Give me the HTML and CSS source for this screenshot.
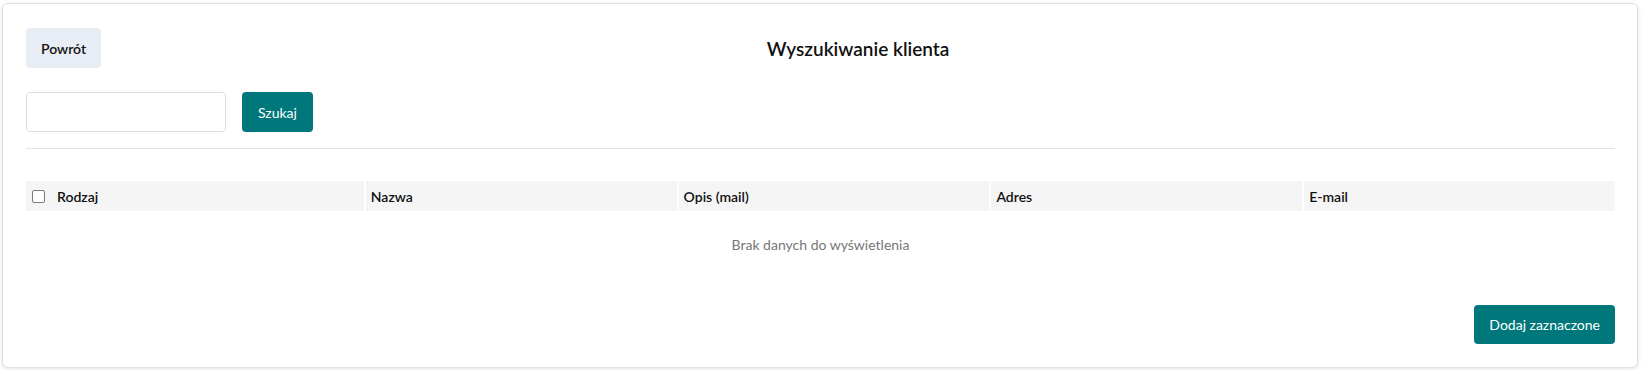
FILE: index.html
```html
<!DOCTYPE html>
<html lang="pl">
<head>
  <meta charset="UTF-8" />
  <title>Wyszukiwanie klienta</title>
  <link rel="stylesheet" href="styles.css">
</head>
<body>
  <div class="card">
    <header class="top">
      <button class="btn-back">Powrót</button>
      <h1>Wyszukiwanie klienta</h1>
    </header>

    <div class="search">
      <input type="text" class="search-input" />
      <button class="btn-primary">Szukaj</button>
    </div>

    <hr class="divider" />

    <table class="results">
      <thead>
        <tr>
          <th class="col-check"><span class="checkbox"></span></th>
          <th>Rodzaj</th>
          <th>Nazwa</th>
          <th>Opis (mail)</th>
          <th>Adres</th>
          <th>E-mail</th>
        </tr>
      </thead>
      <tbody>
        <tr>
          <td colspan="6" class="empty">Brak danych do wyświetlenia</td>
        </tr>
      </tbody>
    </table>

    <div class="actions">
      <button class="btn-primary btn-add">Dodaj zaznaczone</button>
    </div>
  </div>
</body>
</html>
```

FILE: styles.css
```css
html, body {
  margin: 0;
  padding: 0;
  background-color: #fff;
  font-family: Lato, "Open Sans", sans-serif;
  color: #111;
}

body {
  padding: 3px 7px 2px 2px;
}

.card {
  border: 1px solid #e2e2e2;
  border-radius: 6px;
  box-shadow: 0 1px 4px rgba(0,0,0,0.12);
  padding: 24px 22px 23px 23px;
}

.top {
  display: flex;
  align-items: center;
}

.top h1 {
  flex: 1;
  margin: 0;
  text-align: center;
  font-size: 19px;
  font-weight: 600;
}

.btn-back {
  height: 40px;
  padding: 0 15px;
  border: none;
  border-radius: 4px;
  background-color: #e8ecf4;
  font-family: inherit;
  font-size: 14px;
  font-weight: 600;
  color: #111;
}

.search {
  display: flex;
  align-items: center;
  gap: 16px;
  margin-top: 24px;
}

.search-input {
  width: 200px;
  height: 40px;
  box-sizing: border-box;
  border: 1px solid #dedede;
  border-radius: 4px;
}

.btn-primary {
  height: 40px;
  padding: 0 16px;
  border: none;
  border-radius: 4px;
  background-color: #00777a;
  color: #fff;
  font-family: inherit;
  font-size: 14px;
}

.divider {
  border: none;
  border-top: 1px solid #e2e2e2;
  margin: 16px 0 0;
}

.results {
  width: 100%;
  margin-top: 32px;
  border-collapse: separate;
  border-spacing: 0;
  table-layout: fixed;
}

.results th {
  height: 30px;
  padding: 0 5px;
  background-color: #f5f5f5;
  border-left: 2px solid #fff;
  text-align: left;
  font-size: 14px;
  font-weight: 600;
}

.results th:first-child {
  border-left: none;
}

.results th:nth-child(2) {
  border-left: none;
  padding-left: 6px;
}

.results .col-check {
  width: 13px;
  padding: 0 6px;
}

.checkbox {
  display: block;
  width: 11px;
  height: 11px;
  border: 1.5px solid #7a7a85;
  border-radius: 2px;
  background: #fff;
}

.empty {
  height: 65px;
  text-align: center;
  font-size: 14px;
  color: #777;
}

.actions {
  display: flex;
  justify-content: flex-end;
  margin-top: 27px;
}

.btn-add {
  height: 39px;
  font-size: 14px;
  padding: 0 15px;
}
```
